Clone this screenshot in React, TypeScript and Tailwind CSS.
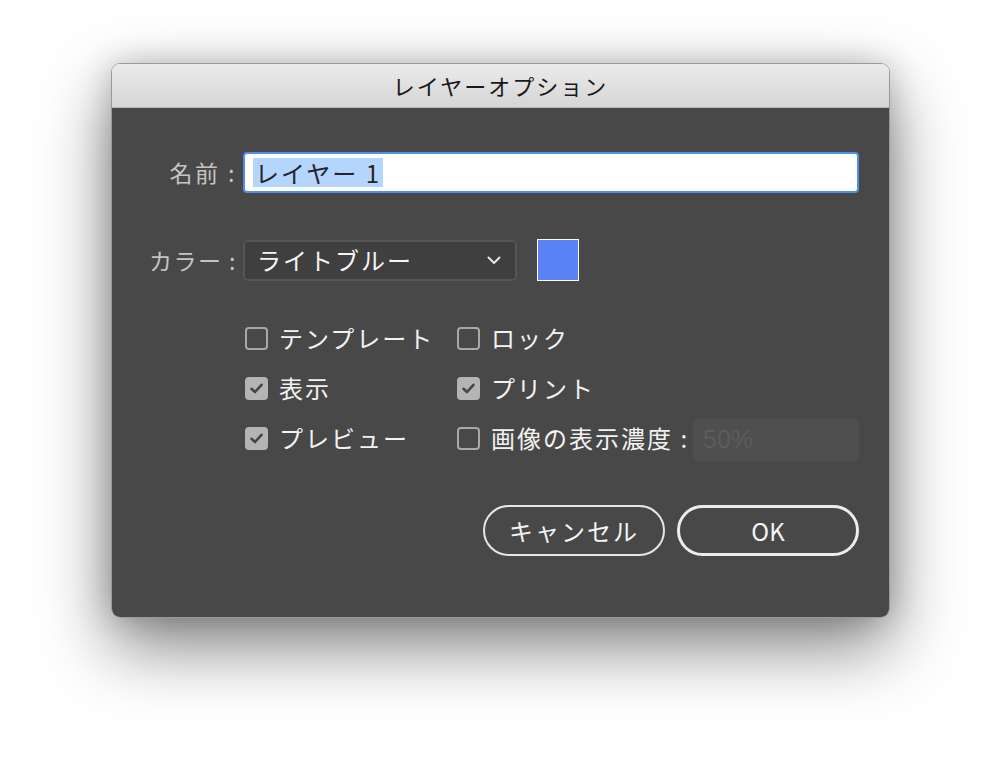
import React from 'react';

const font = { fontFamily: '"Noto Sans CJK JP", "Noto Sans", sans-serif' };

const Box = ({ checked }: { checked?: boolean }) =>
  checked ? (
    <span className="flex h-[23px] w-[23px] shrink-0 items-center justify-center rounded-[4px] bg-[#b4b4b4]">
      <svg width="15" height="15" viewBox="0 0 15 15">
        <path d="M2.5 7.8 L6 11 L12.5 3.8" fill="none" stroke="#454545" strokeWidth="2.6" strokeLinecap="round" strokeLinejoin="round" />
      </svg>
    </span>
  ) : (
    <span className="block h-[23px] w-[23px] shrink-0 rounded-[4px] border-2 border-[#a8a8a8]" />
  );

const Check = ({ label, checked }: { label: string; checked?: boolean }) => (
  <div className="flex h-[42px] items-center gap-[11px]">
    <Box checked={checked} />
    <span className="text-[24px] leading-none tracking-[2px] text-[#f2f2f2]">{label}</span>
  </div>
);

export default function App() {
  return (
    <div className="h-[778px] w-[1002px] bg-white pl-[111px] pt-[63px]" style={font}>
      <div className="w-[779px] overflow-hidden rounded-[9px] border border-[#9a9a9a] shadow-[0_28px_70px_rgba(0,0,0,0.5),0_0_30px_rgba(0,0,0,0.18)]">
        {/* title bar */}
        <div className="flex h-[44px] items-center justify-center border-b border-[#b3b3b3] bg-gradient-to-b from-[#ebebeb] to-[#d5d5d5]">
          <span className="text-[22px] tracking-[2px] text-[#1a1a1a]">レイヤーオプション</span>
        </div>

        <div className="bg-[#484848] pb-[61px] pr-[30px] pt-[44px]">
          {/* name */}
          <div className="flex items-center">
            <div className="w-[131px] whitespace-pre pr-[6px] text-right text-[23px] tracking-[2.5px] text-[#c4c4c4]">名前 :</div>
            <div className="flex h-[41px] flex-1 items-center rounded-[4px] border-2 border-[#4e8fe8] bg-white px-[8px]">
              <span className="whitespace-pre bg-[#b4d5fe] px-[2px] text-[24px] leading-[29px] tracking-[2px] text-[#262626]">レイヤー 1</span>
            </div>
          </div>

          {/* colour */}
          <div className="mt-[46px] flex items-center">
            <div className="w-[131px] whitespace-pre pr-[6px] text-right text-[23px] tracking-[1.5px] text-[#c4c4c4]">カラー :</div>
            <div className="flex h-[41px] w-[274px] items-center justify-between rounded-[5px] border-2 border-[#555555] bg-[#3f3f3f] pl-[12px] pr-[14px]">
              <span className="text-[24px] tracking-[2px] text-[#f4f4f4]">ライトブルー</span>
              <svg width="14" height="9" viewBox="0 0 14 9">
                <path d="M1.5 1.5 L7 7 L12.5 1.5" fill="none" stroke="#e6e6e6" strokeWidth="2" strokeLinecap="round" strokeLinejoin="round" />
              </svg>
            </div>
            <div className="ml-[20px] h-[42px] w-[42px] border border-white bg-[#5b82f5]" />
          </div>

          {/* options */}
          <div className="ml-[133px] mt-[36px] grid grid-cols-[212px_1fr] gap-y-[8px]">
            <Check label="テンプレート" />
            <Check label="ロック" />
            <Check label="表示" checked />
            <Check label="プリント" checked />
            <Check label="プレビュー" checked />
            <div className="flex h-[42px] items-center">
              <Box />
              <span className="ml-[11px] whitespace-pre text-[24px] leading-none tracking-[2px] text-[#f2f2f2]">画像の表示濃度 :</span>
              <div className="ml-[4px] mt-[3px] flex h-[42px] flex-1 items-center rounded-[4px] bg-[#4f4f4f] px-[10px]">
                <span className="text-[25px] text-[#5c5c5c]" style={{ fontFamily: '"Liberation Sans", Arial, sans-serif' }}>50%</span>
              </div>
            </div>
          </div>

          {/* buttons */}
          <div className="mt-[46px] flex justify-end gap-[12px]">
            <button className="flex h-[51px] w-[182px] items-center justify-center rounded-full border-2 border-[#e6e6e6] text-[24px] tracking-[2px] text-[#f4f4f4]">
              キャンセル
            </button>
            <button className="flex h-[51px] w-[182px] items-center justify-center rounded-full border-[3px] border-[#ececec] text-[24px] text-[#f4f4f4]">
              OK
            </button>
          </div>
        </div>
      </div>
    </div>
  );
}
